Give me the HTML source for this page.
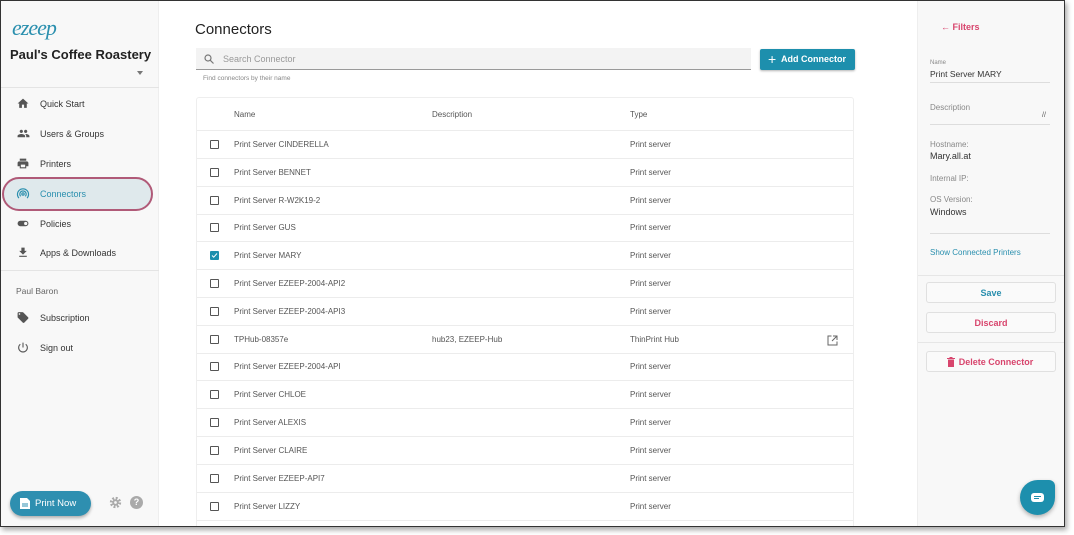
<!DOCTYPE html>
<html><head><style>
*{box-sizing:border-box;margin:0;padding:0}
body{width:1074px;height:535px;background:#fff;font-family:"Liberation Sans",sans-serif;position:relative;overflow:hidden}
#frame{position:absolute;left:0;top:0;width:1065px;height:527px;border:1.5px solid #333;overflow:hidden;box-shadow:2px 3px 5px rgba(0,0,0,.35);background:#fff}
#side{position:absolute;left:0;top:0;width:158px;height:100%;background:#f8f8f8;border-right:1px solid #eee}
.logo{position:absolute;left:11px;top:14px;font:italic 22px "Liberation Serif",serif;color:#2a8fae;letter-spacing:-1px}
.org{position:absolute;left:9px;top:46px;font-size:13px;font-weight:bold;color:#222}
.caret{position:absolute;left:136px;top:70px;border:3px solid transparent;border-top:4px solid #777}
.hr{position:absolute;left:0;width:158px;height:1px;background:#e4e4e4}
.nav{position:absolute;left:0;width:158px;height:30px;font-size:9px;color:#333;line-height:30px;padding-left:39px}
.nav svg{position:absolute;left:15px;top:8px}
.sel{position:absolute;left:1px;top:176px;width:151px;height:34px;border:2px solid #b05a78;border-radius:17px;background:#dfe9ec}
#main{position:absolute;left:157px;top:0;width:759px;height:100%}
h1{position:absolute;left:37px;top:20px;font-size:15px;font-weight:normal;color:#222}
.search{position:absolute;left:38px;top:47px;width:555px;height:22px;background:#f3f3f3;border-bottom:1px solid #999;font-size:9px;color:#999;line-height:22px;padding-left:27px}
.hint{position:absolute;left:45px;top:74px;font-size:6.5px;color:#888}
.add{position:absolute;left:602px;top:48px;width:95px;height:21px;background:#1d8fad;border-radius:2px;color:#fff;font-size:9px;font-weight:bold;line-height:21px;padding-left:21px;box-shadow:0 1px 2px rgba(0,0,0,.3)}
.add:before{content:"+";position:absolute;left:8px;top:0;font-size:14px;font-weight:normal}
#tbl{position:absolute;left:38px;top:96px;width:658px;height:440px;border:1px solid #eee;border-radius:3px}
.row{position:absolute;left:0;width:656px;height:28px;border-bottom:1px solid #ececec;font-size:8px;color:#555;line-height:28px}
.row span{position:absolute}
.cb{position:absolute;left:13px;top:9px;width:9px;height:9px;border:1.3px solid #555;border-radius:1px}
.cb.on{background:#1d8fad;border-color:#1d8fad}
#right{position:absolute;left:916px;top:0;width:150px;height:100%;background:#f8f8f8;border-left:1px solid #eee}
.lbl{position:absolute;left:12px;font-size:8px;color:#888}
.val{position:absolute;left:12px;font-size:9px;color:#333}
.line{position:absolute;left:12px;width:120px;height:1px;background:#ddd}
.btn{position:absolute;left:8px;width:130px;height:21px;border:1px solid #e0e0e0;border-radius:3px;background:#fafafa;text-align:center;line-height:20px;font-size:9px;font-weight:bold}
</style></head><body>
<div id="frame">
<div id="side">
<div class="logo">ezeep</div>
<div class="org">Paul's Coffee Roastery</div>
<div class="caret"></div>
<div class="hr" style="top:86px"></div>
<div class="sel"></div>
<div class="nav" style="top:88px"><svg width="14" height="13" viewBox="0 0 24 24"><path d="M10 20v-6h4v6h5v-8h3L12 3 2 12h3v8z" fill="#555"/></svg>Quick Start</div>
<div class="nav" style="top:118px"><svg width="15" height="13" viewBox="0 0 24 24"><path d="M16 11c1.7 0 3-1.3 3-3s-1.3-3-3-3-3 1.3-3 3 1.3 3 3 3zm-8 0c1.7 0 3-1.3 3-3S9.7 5 8 5 5 6.3 5 8s1.3 3 3 3zm0 2c-2.3 0-7 1.2-7 3.5V19h14v-2.5C15 14.2 10.3 13 8 13zm8 0c-.3 0-.6 0-1 .1 1.2.8 2 2 2 3.4V19h6v-2.5c0-2.300-4.7-3.5-7-3.5z" fill="#555"/></svg>Users &amp; Groups</div>
<div class="nav" style="top:148px"><svg width="14" height="13" viewBox="0 0 24 24"><path d="M19 8H5c-1.7 0-3 1.3-3 3v6h4v4h12v-4h4v-6c0-1.7-1.3-3-3-3zm-3 11H8v-5h8v5zm2-16H6v4h12V3z" fill="#555"/></svg>Printers</div>
<div class="nav" style="top:178px;color:#2a8fae"><svg width="14" height="14" viewBox="0 0 24 24" fill="none" stroke="#2a8fae" stroke-width="2"><circle cx="12" cy="12" r="2"/><path d="M8 16a5.5 5.5 0 1 1 8 0M5 19a9.5 9.5 0 1 1 14 0"/></svg>Connectors</div>
<div class="nav" style="top:208px"><svg width="14" height="13" viewBox="0 0 24 24"><rect x="2" y="7" width="20" height="10" rx="5" fill="#555"/><circle cx="17" cy="12" r="3" fill="#f8f8f8"/></svg>Policies</div>
<div class="nav" style="top:237px"><svg width="14" height="13" viewBox="0 0 24 24"><path d="M19 9h-4V3H9v6H5l7 7 7-7zM5 18v2h14v-2H5z" fill="#555"/></svg>Apps &amp; Downloads</div>
<div class="hr" style="top:269px"></div>
<div style="position:absolute;left:15px;top:285px;font-size:8.5px;color:#666">Paul Baron</div>
<div class="nav" style="top:302px"><svg width="14" height="13" viewBox="0 0 24 24"><path d="M21.4 11.6l-9-9C12.1 2.2 11.6 2 11 2H4c-1.1 0-2 .9-2 2v7c0 .6.2 1.1.6 1.4l9 9c.4.4.9.6 1.4.6s1.1-.2 1.4-.6l7-7c.4-.4.6-.9.6-1.4s-.2-1.1-.6-1.4zM5.5 7C4.7 7 4 6.3 4 5.5S4.7 4 5.5 4 7 4.7 7 5.5 6.3 7 5.5 7z" fill="#555"/></svg>Subscription</div>
<div class="nav" style="top:332px"><svg width="14" height="13" viewBox="0 0 24 24" fill="none" stroke="#555" stroke-width="2"><path d="M12 3v9M7 6a8 8 0 1 0 10 0"/></svg>Sign out</div>
<div style="position:absolute;left:9px;top:490px;width:81px;height:25px;border-radius:13px;background:#2e8fb0;color:#fff;font-size:9.5px;line-height:25px;padding-left:25px;box-shadow:0 2px 3px rgba(0,0,0,.3)"><svg style="position:absolute;left:10px;top:6px" width="10" height="13" viewBox="0 0 10 13"><path d="M0 1v11h10V4L7 1z" fill="#fff"/><path d="M2 7h6M2 9h6" stroke="#2e8fb0"/></svg>Print Now</div>
<svg style="position:absolute;left:108px;top:495px" width="13" height="13" viewBox="0 0 24 24"><circle cx="12" cy="12" r="8" fill="none" stroke="#aaa" stroke-width="5" stroke-dasharray="3.5 2.8"/><circle cx="12" cy="12" r="6" fill="#aaa"/><circle cx="12" cy="12" r="2.5" fill="#f8f8f8"/></svg>
<div style="position:absolute;left:129px;top:495px;width:13px;height:13px;border-radius:50%;background:#aaa;color:#fff;font-size:9px;font-weight:bold;text-align:center;line-height:13px">?</div>
</div>
<div id="main">
<h1>Connectors</h1>
<div class="search"><svg style="position:absolute;left:8px;top:6px" width="10" height="10" viewBox="0 0 10 10" fill="none" stroke="#777" stroke-width="1.2"><circle cx="4" cy="4" r="3"/><path d="M6.3 6.3L9.5 9.5"/></svg>Search Connector</div>
<div class="hint">Find connectors by their name</div>
<div class="add">Add Connector</div>
<div id="tbl">
<div class="row" style="top:3px;height:30px"><span style="left:37px">Name</span><span style="left:235px">Description</span><span style="left:433px">Type</span></div>
<div class="row" style="top:33px"><div class="cb"></div><span style="left:37px">Print Server CINDERELLA</span><span style="left:433px">Print server</span></div>
<div class="row" style="top:61px"><div class="cb"></div><span style="left:37px">Print Server BENNET</span><span style="left:433px">Print server</span></div>
<div class="row" style="top:89px"><div class="cb"></div><span style="left:37px">Print Server R-W2K19-2</span><span style="left:433px">Print server</span></div>
<div class="row" style="top:116px"><div class="cb"></div><span style="left:37px">Print Server GUS</span><span style="left:433px">Print server</span></div>
<div class="row" style="top:144px"><div class="cb on"><svg style="position:absolute;left:0;top:0" width="7" height="7" viewBox="0 0 7 7"><path d="M1 3.5l1.7 1.7L6 1.5" stroke="#fff" fill="none" stroke-width="1"/></svg></div><span style="left:37px">Print Server MARY</span><span style="left:433px">Print server</span></div>
<div class="row" style="top:172px"><div class="cb"></div><span style="left:37px">Print Server EZEEP-2004-API2</span><span style="left:433px">Print server</span></div>
<div class="row" style="top:200px"><div class="cb"></div><span style="left:37px">Print Server EZEEP-2004-API3</span><span style="left:433px">Print server</span></div>
<div class="row" style="top:228px"><div class="cb"></div><span style="left:37px">TPHub-08357e</span><span style="left:235px">hub23, EZEEP-Hub</span><span style="left:433px">ThinPrint Hub</span><svg style="position:absolute;left:630px;top:9px" width="11" height="11" viewBox="0 0 11 11" fill="none" stroke="#666" stroke-width="1"><path d="M4.5 1H1v9h9V6.5M6 1h4v4M10 1L5 6"/></svg></div>
<div class="row" style="top:255px"><div class="cb"></div><span style="left:37px">Print Server EZEEP-2004-API</span><span style="left:433px">Print server</span></div>
<div class="row" style="top:283px"><div class="cb"></div><span style="left:37px">Print Server CHLOE</span><span style="left:433px">Print server</span></div>
<div class="row" style="top:311px"><div class="cb"></div><span style="left:37px">Print Server ALEXIS</span><span style="left:433px">Print server</span></div>
<div class="row" style="top:339px"><div class="cb"></div><span style="left:37px">Print Server CLAIRE</span><span style="left:433px">Print server</span></div>
<div class="row" style="top:367px"><div class="cb"></div><span style="left:37px">Print Server EZEEP-API7</span><span style="left:433px">Print server</span></div>
<div class="row" style="top:395px"><div class="cb"></div><span style="left:37px">Print Server LIZZY</span><span style="left:433px">Print server</span></div>
</div>
</div>
<div id="right">
<div style="position:absolute;left:23px;top:21px;font-size:9px;font-weight:bold;color:#d8456d">← Filters</div>
<div class="lbl" style="top:59px;font-size:6px">Name</div>
<div class="val" style="top:68px;font-size:8.5px">Print Server MARY</div>
<div class="line" style="top:81px"></div>
<div class="lbl" style="top:102px">Description</div>
<div style="position:absolute;left:124px;top:111px;font-size:7px;color:#555">//</div>
<div class="line" style="top:123px"></div>
<div class="lbl" style="top:139px">Hostname:</div>
<div class="val" style="top:150px">Mary.all.at</div>
<div class="lbl" style="top:173px">Internal IP:</div>
<div class="lbl" style="top:194px">OS Version:</div>
<div class="val" style="top:206px">Windows</div>
<div class="line" style="top:232px"></div>
<div style="position:absolute;left:12px;top:247px;font-size:8px;color:#2a8fae">Show Connected Printers</div>
<div style="position:absolute;left:0;top:274px;width:150px;height:1px;background:#e6e6e6"></div>
<div class="btn" style="top:281px;color:#2a8fae">Save</div>
<div class="btn" style="top:311px;color:#d8456d">Discard</div>
<div style="position:absolute;left:0;top:341px;width:150px;height:1px;background:#e6e6e6"></div>
<div class="btn" style="top:350px;color:#d8456d"><svg style="position:absolute;left:20px;top:5px" width="8" height="10" viewBox="0 0 8 10"><path d="M0 1h8v1H0zM1 2.5h6V10H1zM2.5 0h3v1h-3z" fill="#d8456d"/></svg>&nbsp;&nbsp;&nbsp;&nbsp;Delete Connector</div>
<div style="position:absolute;left:102px;top:479px;width:35px;height:35px;border-radius:50%;border-top-right-radius:6px;background:#1d8fad;box-shadow:0 2px 4px rgba(0,0,0,.3)"><div style="position:absolute;left:11px;top:13px;width:13px;height:9px;border-radius:3px;background:#fff"></div><div style="position:absolute;left:14px;top:16px;width:7px;height:1px;background:#1d8fad"></div><div style="position:absolute;left:14px;top:18px;width:5px;height:1px;background:#1d8fad"></div></div>
</div>
</div>
</body></html>
